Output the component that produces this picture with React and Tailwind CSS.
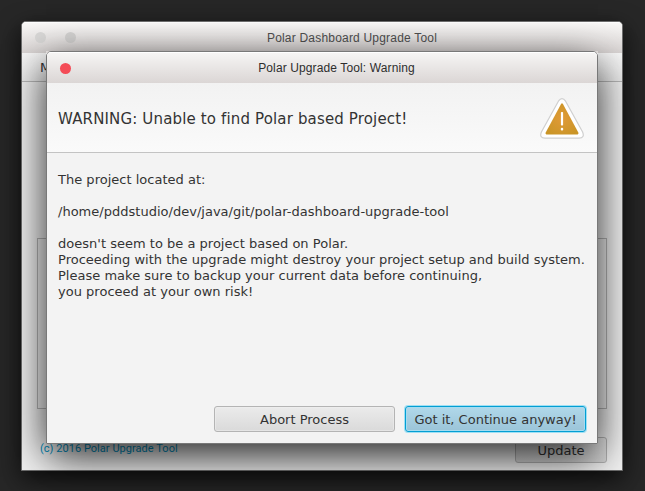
const message = `The project located at:

/home/pddstudio/dev/java/git/polar-dashboard-upgrade-tool

doesn't seem to be a project based on Polar.
Proceeding with the upgrade might destroy your project setup and build system.
Please make sure to backup your current data before continuing,
you proceed at your own risk!`;

function WarningIcon() {
  return (
    <svg width="44" height="42" viewBox="0 0 44 42" className="mt-[2px] shrink-0">
      <defs>
        <radialGradient id="amber" cx="50%" cy="50%" r="60%">
          <stop offset="0" stopColor="#e09a38" />
          <stop offset="1" stopColor="#ca9526" />
        </radialGradient>
      </defs>
      <path
        d="M18.4 3.2 Q22 -2 25.6 3.2 L42.6 34 Q45 39.9 39 40.2 L5 40.2 Q-1 39.9 1.4 34 Z"
        fill="#ffffff"
        stroke="#cfcfcf"
        strokeWidth="1.2"
      />
      <path
        d="M21.2 5.8 Q22 4.8 22.8 5.8 L38.3 34.6 Q38.9 36.3 37.6 36.4 L6.4 36.4 Q5.1 36.3 5.7 34.6 Z"
        fill="url(#amber)"
      />
      <rect x="20.9" y="14" width="2.2" height="13.4" rx="0.7" fill="#fff" />
      <rect x="20.8" y="29.8" width="2.4" height="2.8" rx="1" fill="#fff" />
    </svg>
  );
}

function MainWindow() {
  return (
    <div className="absolute left-[21px] top-[21px] flex h-[450px] w-[602px] flex-col overflow-hidden rounded-t-[5px] border border-[#6e6e6e] bg-[#f3f3f3]">
      <div className="relative flex h-[31px] shrink-0 items-center justify-center border-t border-white bg-linear-to-b from-[#f9f8f7] to-[#dbd6d5]">
        <div className="absolute left-[13px] top-[9px] flex gap-[19px]">
          <span className="size-[11px] rounded-full bg-[#d9d8d7]" />
          <span className="size-[11px] rounded-full bg-[#d5d4d3]" />
        </div>
        <span className="whitespace-nowrap pl-[60px] font-['Liberation_Sans',sans-serif] text-[12px] tracking-[0.2px] text-[#505050]">
          Polar Dashboard Upgrade Tool
        </span>
      </div>
      <div className="flex h-[29px] shrink-0 items-center border-b border-[#b9b9b9] bg-linear-to-b from-[#fafafa] to-[#eeeeee] pl-[18px] pt-[2px] text-[13px] text-[#333]">
        Menu
      </div>
      <div className="mx-[15px] mt-[156px] h-[171px] shrink-0 border border-[#b8b8b8]" />
      <div className="mr-[15px] ml-[18px] mt-[28px] flex items-start justify-between">
        <span className="mt-[5px] font-['Roboto',sans-serif] text-[11px] leading-[14px] tracking-[0.04px] text-[#0096c9]">
          (c) 2016 Polar Upgrade Tool
        </span>
        <button className="h-[26px] w-[92px] rounded-[3px] border border-[#b5b5b5] bg-linear-to-b from-[#ececec] to-[#dadada] pt-[2px] text-[13px] leading-[22px] text-[#333]">
          Update
        </button>
      </div>
    </div>
  );
}

function WarningDialog() {
  return (
    <div className="absolute left-[46px] top-[51px] flex h-[393px] w-[552px] flex-col overflow-hidden rounded-t-[5px] border border-[#787878] bg-[#f3f3f3]">
      <div className="relative flex h-[31px] shrink-0 items-center justify-center border-t border-white bg-linear-to-b from-[#f6f5f4] to-[#dbd6d5]">
        <span className="absolute left-[13px] top-[10px] size-[11px] rounded-full bg-[#f44c57]" />
        <span className="whitespace-nowrap pl-[29px] font-['Liberation_Sans',sans-serif] text-[12px] tracking-[0.12px] text-[#2e2e2e]">
          Polar Upgrade Tool: Warning
        </span>
      </div>
      <div className="flex h-[70px] shrink-0 items-center justify-between border-b border-[#c3c3c3] bg-linear-to-b from-[#f2f2f2] to-[#fafafa] pl-[11px] pr-[13px]">
        <h1 className="whitespace-nowrap pt-[3px] text-[15px] tracking-[0.15px] text-[#333]">
          WARNING: Unable to find Polar based Project!
        </h1>
        <WarningIcon />
      </div>
      <p className="grow whitespace-pre pl-[11px] pt-[19px] text-[13px] leading-[16px] tracking-[0.015px] text-[#333]">
        {message}
      </p>
      <div className="flex shrink-0 justify-end gap-[10px] pb-[11px] pr-[11px] text-[13px] leading-[24px] text-[#333]">
        <button className="h-[26px] w-[181px] rounded-[3px] border border-[#b4b4b4] bg-linear-to-b from-[#ebebeb] to-[#dadada] pt-px shadow-[inset_0_0_0_1px_#f0f0f080]">
          Abort Process
        </button>
        <button className="h-[26px] w-[181px] whitespace-nowrap rounded-[3px] border border-[#039ed3] bg-linear-to-b from-[#b0d8ea] to-[#9bc4d8] pt-px shadow-[0_0_0_1px_#9fe0f4,inset_0_0_0_1px_#a5dcf0]">
          Got it, Continue anyway!
        </button>
      </div>
    </div>
  );
}

export default function App() {
  return (
    <div className="relative h-[491px] w-[645px] overflow-hidden bg-[#272727] font-['DejaVu_Sans',sans-serif]">
      <div className="absolute left-[21px] top-[21px] h-[450px] w-[602px] rounded-[5px] shadow-[0_8px_24px_rgba(0,0,0,0.7)]" />
      <MainWindow />
      <div className="absolute left-[46px] top-[51px] h-[393px] w-[552px] shadow-[0_13px_40px_rgba(0,0,0,0.85)]" />
      <WarningDialog />
    </div>
  );
}
